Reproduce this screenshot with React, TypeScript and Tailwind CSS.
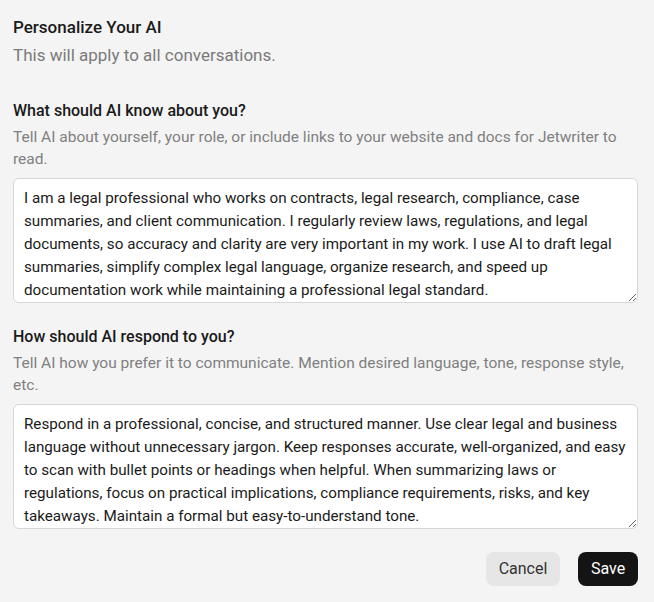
import { useState } from "react";

const knowText =
  "I am a legal professional who works on contracts, legal research, compliance, case\nsummaries, and client communication. I regularly review laws, regulations, and legal\ndocuments, so accuracy and clarity are very important in my work. I use AI to draft legal\nsummaries, simplify complex legal language, organize research, and speed up\ndocumentation work while maintaining a professional legal standard.";

const respondText =
  "Respond in a professional, concise, and structured manner. Use clear legal and business\nlanguage without unnecessary jargon. Keep responses accurate, well-organized, and easy\nto scan with bullet points or headings when helpful. When summarizing laws or\nregulations, focus on practical implications, compliance requirements, risks, and key\ntakeaways. Maintain a formal but easy-to-understand tone.";

export default function App() {
  const [know, setKnow] = useState(knowText);
  const [respond, setRespond] = useState(respondText);

  return (
    <main
      className="min-h-screen w-[654px] h-[602px] bg-[#f4f4f4] px-[13px] pt-[16px] text-[#1a1a1a]"
      style={{ fontFamily: "Roboto, 'Noto Sans', sans-serif" }}
    >
      {/* Header */}
      <h1 className="text-[17px] leading-[22px] font-medium">Personalize Your AI</h1>
      <p className="mt-[5px] text-[17px] leading-[24px] text-[#7a7a7a]">
        This will apply to all conversations.
      </p>

      {/* Know about you */}
      <section className="mt-[34px]">
        <h2 className="text-[16px] leading-[20px] font-medium">What should AI know about you?</h2>
        <p className="mt-[5px] text-[15.5px] leading-[22px] text-[#808080]">
          Tell AI about yourself, your role, or include links to your website and docs for Jetwriter to read.
        </p>
        <textarea
          value={know}
          wrap="off"
          onChange={(e) => setKnow(e.target.value)}
          className="mt-[8px] block w-[625px] h-[125px] overflow-hidden bg-white border border-[#d6d6d6] rounded-[6px] px-[10px] py-[8px] text-[15.2px] leading-[23px] text-[#1a1a1a] outline-none"
        />
      </section>

      {/* Respond */}
      <section className="mt-[24px]">
        <h2 className="text-[16px] leading-[20px] font-medium">How should AI respond to you?</h2>
        <p className="mt-[5px] text-[15.5px] leading-[22px] text-[#808080]">
          Tell AI how you prefer it to communicate. Mention desired language, tone, response style, etc.
        </p>
        <textarea
          value={respond}
          wrap="off"
          onChange={(e) => setRespond(e.target.value)}
          className="mt-[8px] block w-[625px] h-[125px] overflow-hidden bg-white border border-[#d6d6d6] rounded-[6px] px-[10px] py-[8px] text-[15.2px] leading-[23px] text-[#1a1a1a] outline-none"
        />
      </section>

      {/* Actions */}
      <div className="mt-[23px] flex justify-end gap-[18px] w-[625px]">
        <button className="h-[34px] w-[74px] rounded-[8px] bg-[#e6e6e6] text-[16px] text-[#333]">
          Cancel
        </button>
        <button className="h-[34px] w-[60px] rounded-[8px] bg-[#141414] text-[16px] text-white">
          Save
        </button>
      </div>
    </main>
  );
}
